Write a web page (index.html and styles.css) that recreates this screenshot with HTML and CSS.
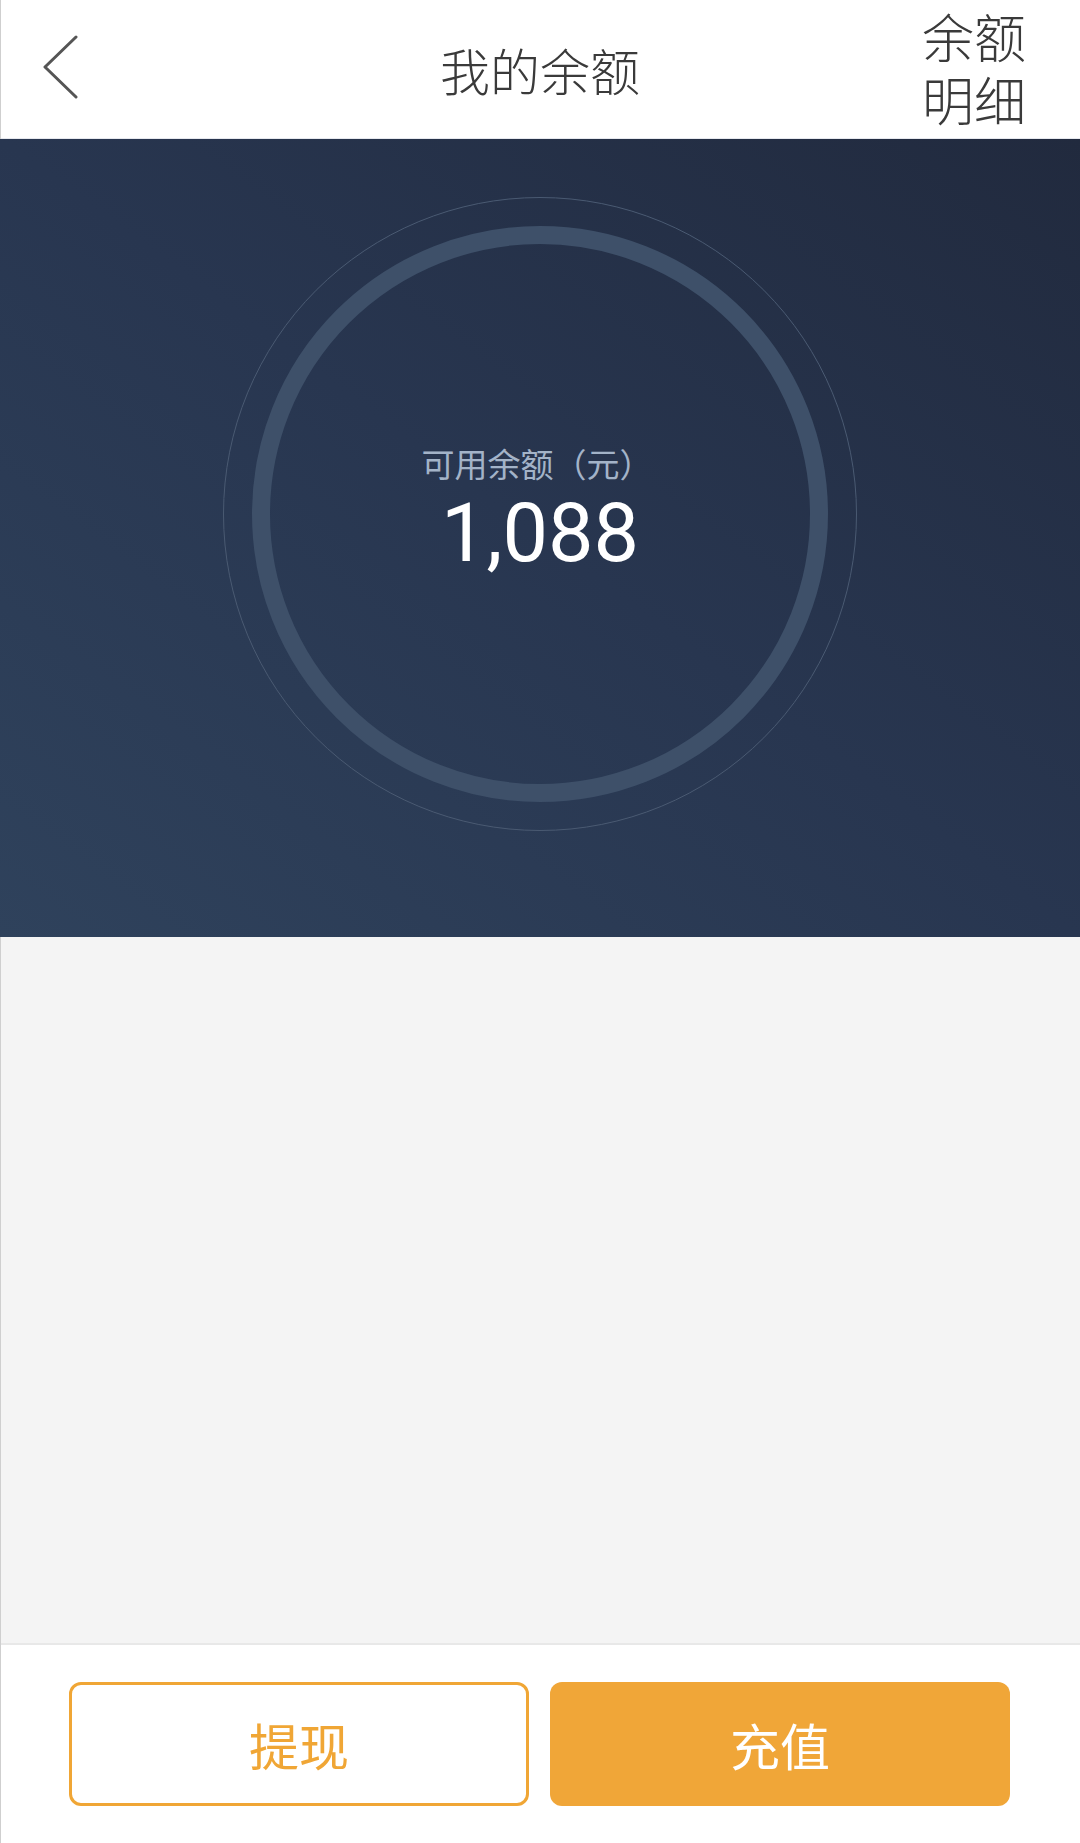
FILE: index.html
```html
<!DOCTYPE html>
<html lang="zh-CN">
<head>
<meta charset="utf-8">
<title>我的余额</title>
<link rel="stylesheet" href="styles.css">
</head>
<body>
<div class="page">
  <header class="topbar">
    <div class="back">
      <svg width="40" height="70" viewBox="0 0 40 70" aria-hidden="true">
        <polyline points="34,2 3,32 34,62" fill="none" stroke="#555" stroke-width="3" stroke-linecap="round" stroke-linejoin="round"/>
      </svg>
    </div>
    <h1 class="title">我的余额</h1>
    <div class="detail"><span class="line">余额</span><span class="line">明细</span></div>
  </header>
  <section class="hero">
    <div class="outer">
      <div class="ring">
        <div class="amount">
          <div class="label">可用余额（元）</div>
          <div class="value">1,088</div>
        </div>
      </div>
    </div>
  </section>
  <main class="filler"></main>
  <footer class="actions">
    <button class="btn btn-outline">提现</button>
    <button class="btn btn-fill">充值</button>
  </footer>
</div>
</body>
</html>
```

FILE: styles.css
```css
* { box-sizing: border-box; }
html, body { margin: 0; padding: 0; }
body {
  width: 1080px;
  height: 1843px;
  font-family: "Noto Sans CJK SC", "Noto Sans", Roboto, sans-serif;
  background: #f4f4f4;
}
.page {
  display: flex;
  flex-direction: column;
  height: 1843px;
  border-left: 1px solid #cfcfcf;
}
.topbar {
  height: 139px;
  background: #fff;
  display: grid;
  grid-template-columns: 1fr auto 1fr;
  align-items: center;
  border-bottom: 1px solid #e6e8ee;
}
.back {
  padding-left: 41px;
  padding-top: 2px;
  display: flex;
  align-items: center;
}
.title {
  margin: 0;
  font-size: 50px;
  font-weight: 300;
  color: #3a3a3a;
  line-height: 1;
  margin-left: -1px;
}
.detail {
  justify-self: end;
  align-self: start;
  padding-top: 8px;
  padding-right: 54px;
  display: flex;
  flex-direction: column;
  gap: 7px;
  font-size: 52px;
  font-weight: 300;
  color: #3a3a3a;
}
.detail .line {
  display: block;
  line-height: 56px;
  height: 56px;
}
.hero {
  height: 798px;
  margin-left: -1px;
  background: linear-gradient(to top right, #2f425c 0%, #283650 50%, #212a3e 100%);
  display: flex;
  justify-content: center;
  padding-top: 58px;
}
.outer {
  width: 634px;
  height: 634px;
  border-radius: 50%;
  border: 1.5px solid #4a5a72;
  display: flex;
  align-items: center;
  justify-content: center;
}
.ring {
  width: 576px;
  height: 576px;
  border-radius: 50%;
  border: 18px solid #3e5069;
  display: flex;
  align-items: center;
  justify-content: center;
}
.amount {
  display: flex;
  flex-direction: column;
  align-items: center;
  margin-top: -6px;
}
.label {
  font-size: 33px;
  line-height: 42px;
  color: #a3b3c8;
  margin-left: -6px;
}
.value {
  font-family: Roboto, "Noto Sans", sans-serif;
  font-size: 81px;
  line-height: 94px;
  color: #fff;
  margin-top: 3px;
}
.filler {
  flex: 1;
  background: #f4f4f4;
}
.actions {
  height: 200px;
  background: #fff;
  border-top: 2px solid #e8e8e8;
  display: flex;
  gap: 21px;
  padding: 37px 70px 0 68px;
}
.btn {
  width: 460px;
  height: 124px;
  border-radius: 12px;
  font-family: "Noto Sans CJK SC", sans-serif;
  font-size: 50px;
  cursor: pointer;
}
.btn-outline {
  background: #fff;
  border: 3px solid #f0a635;
  color: #f0a635;
}
.btn-fill {
  background: #f0a638;
  border: none;
  color: #fff;
}
```
